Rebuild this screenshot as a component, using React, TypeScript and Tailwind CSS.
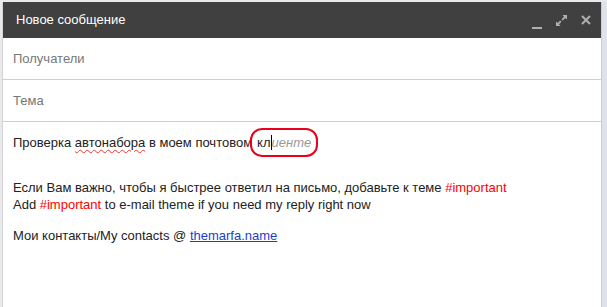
function MinimizeIcon() {
  return (
    <svg width="10" height="10" viewBox="0 0 10 10" fill="#b0b0b0" className="mt-[8px]">
      <rect x="0" y="8" width="10" height="2" />
    </svg>
  );
}

function ExpandIcon() {
  return (
    <svg width="11" height="11" viewBox="0 0 12 12" fill="#b0b0b0">
      <path d="M7 0h5v5l-1.8-1.8L7.4 6 6 4.6l2.8-2.8z" />
      <path d="M5 12H0V7l1.8 1.8L4.6 6 6 7.4 3.2 10.2z" />
    </svg>
  );
}

function CloseIcon() {
  return (
    <svg width="10" height="10" viewBox="0 0 10 10" stroke="#b0b0b0" strokeWidth="2">
      <path d="M1 1l8 8M9 1l-8 8" />
    </svg>
  );
}

export default function App() {
  return (
    <div className="flex h-[307px] w-[607px] overflow-hidden bg-[#e9e9eb] pt-[2px] pl-[2px] font-['Liberation_Sans',Arial,sans-serif]">
      <div className="flex w-[599px] flex-col border-l border-[#d4d4d4] bg-white">
        <div className="flex h-[36px] items-center justify-between bg-[#404040] pl-[13px] pr-[10px]">
          <span className="text-[13px] text-white">Новое сообщение</span>
          <div className="flex items-center gap-[14px]">
            <MinimizeIcon />
            <ExpandIcon />
            <CloseIcon />
          </div>
        </div>
        <div className="flex h-[42px] items-center border-b border-[#cfcfcf] px-[10px] text-[13px] text-[#777]">
          Получатели
        </div>
        <div className="flex h-[42px] items-center border-b border-[#cfcfcf] px-[10px] text-[13px] text-[#777]">
          Тема
        </div>
        <div className="px-[10px] pt-[12px] text-[13px] leading-[17px] text-[#222]">
          <div className="flex items-center">
            <span>
              Проверка{" "}
              <span className="underline decoration-[#e33] decoration-wavy decoration-1 underline-offset-2">
                автонабора
              </span>{" "}
              в моем почтовом
            </span>
            <span className="-my-[6px] -ml-[2px] flex items-center rounded-[12px] border-2 border-[#e8001c] px-[5px] py-[4px]">
              кл
              <span className="h-[15px] w-px bg-black" />
              <span className="italic text-[#999]">иенте</span>
            </span>
          </div>
          <div className="mt-[28px]">
            Если Вам важно, чтобы я быстрее ответил на письмо, добавьте к теме{" "}
            <span className="text-[#ff0000]">#important</span>
          </div>
          <div>
            Add <span className="text-[#ff0000]">#important</span> to e-mail theme if you need my reply right now
          </div>
          <div className="mt-[14px]">
            Мои контакты/My contacts @{" "}
            <span className="text-[#1a3fcc] underline">themarfa.name</span>
          </div>
        </div>
      </div>
      <div className="w-[6px] border-l border-[#c8ccd4] bg-[#dfe2e8]" />
    </div>
  );
}
